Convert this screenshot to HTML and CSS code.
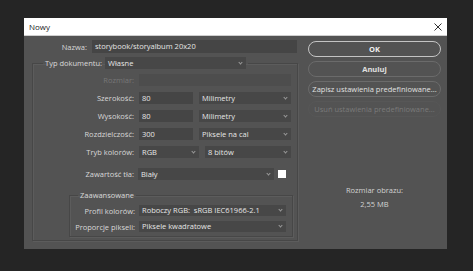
FILE: index.html
```html
<!DOCTYPE html>
<html lang="pl">
<head>
    <meta charset="UTF-8">
    <title>Nowy</title>
    <link rel="stylesheet" href="styles.css">
</head>
<body>
<div class="screen">
    <div class="dialog">
        <div class="titlebar">
            <span class="title">Nowy</span>
            <svg class="close" width="8" height="8" viewBox="0 0 8 8">
                <path d="M0.5 0.5 L7.5 7.5 M7.5 0.5 L0.5 7.5" stroke="#333" stroke-width="1" fill="none"/>
            </svg>
        </div>

        <div class="content">
            <!-- left: form -->
            <div class="form">
                <div class="row">
                    <label class="lbl lbl-name">Nazwa:</label>
                    <div class="input w-name">storybook/storyalbum 20x20</div>
                </div>

                <fieldset class="group outer">
                    <legend class="row legend-doc">
                        <label class="lbl lbl-doc">Typ dokumentu:</label>
                        <div class="select w-doc">Własne</div>
                    </legend>

                    <div class="row first">
                        <label class="lbl lbl-outer disabled">Rozmiar:</label>
                        <div class="input input-off w-size"></div>
                    </div>
                    <div class="row">
                        <label class="lbl lbl-outer">Szerokość:</label>
                        <div class="input w-num">80</div>
                        <div class="select w-unit">Milimetry</div>
                    </div>
                    <div class="row">
                        <label class="lbl lbl-outer">Wysokość:</label>
                        <div class="input w-num">80</div>
                        <div class="select w-unit">Milimetry</div>
                    </div>
                    <div class="row">
                        <label class="lbl lbl-outer">Rozdzielczość:</label>
                        <div class="input w-num">300</div>
                        <div class="select w-unit">Piksele na cal</div>
                    </div>
                    <div class="row">
                        <label class="lbl lbl-outer">Tryb kolorów:</label>
                        <div class="select w-mode">RGB</div>
                        <div class="select w-bits">8 bitów</div>
                    </div>
                    <div class="row row-bg">
                        <label class="lbl lbl-outer">Zawartość tła:</label>
                        <div class="select w-bg">Biały</div>
                        <span class="swatch"></span>
                    </div>

                    <fieldset class="group inner">
                        <legend class="legend-adv">Zaawansowane</legend>
                        <div class="row first small">
                            <label class="lbl lbl-inner">Profil kolorów:</label>
                            <div class="select w-inner">Roboczy RGB:&nbsp; sRGB IEC61966-2.1</div>
                        </div>
                        <div class="row small">
                            <label class="lbl lbl-inner">Proporcje pikseli:</label>
                            <div class="select w-inner">Piksele kwadratowe</div>
                        </div>
                    </fieldset>
                </fieldset>
            </div>

            <!-- right: buttons -->
            <div class="actions">
                <button class="btn btn-primary">OK</button>
                <button class="btn btn-bold">Anuluj</button>
                <button class="btn">Zapisz ustawienia predefiniowane...</button>
                <button class="btn btn-off">Usuń ustawienia predefiniowane...</button>
                <div class="info">
                    <div>Rozmiar obrazu:</div>
                    <div class="info-value">2,55 MB</div>
                </div>
            </div>
        </div>
    </div>
</div>
</body>
</html>
```

FILE: styles.css
```css
* {
    box-sizing: border-box;
}
body {
    margin: 0;
    font-family: "Open Sans", "Noto Sans", sans-serif;
    font-size: 7.5px;
}
.screen {
    width: 473px;
    height: 271px;
    background-color: #252525;
    padding: 18px 0 0 24px;
}
.dialog {
    width: 423px;
    height: 231px;
    background-color: #535353;
}
.titlebar {
    height: 18px;
    background-color: #fff;
    border-bottom: 1px solid #cfcfcf;
    display: flex;
    align-items: center;
    justify-content: space-between;
    padding: 0 5px 0 5px;
}
.title {
    color: #222;
    font-size: 8px;
}
.content {
    display: flex;
    padding: 4px 6px 0 8px;
    gap: 10px;
}

/* form column */
.form {
    width: 266px;
    color: #d8d8d8;
}
.row {
    display: flex;
    align-items: center;
    gap: 5px;
    height: 12px;
    margin-top: 6px;
}
.form > .row:first-child {
    margin-top: 0;
    height: 13px;
}
.lbl {
    text-align: right;
    white-space: nowrap;
    flex: none;
}
.lbl.disabled {
    color: #777;
}
.lbl-name { width: 55px; }
.lbl-outer { width: 101px; }
.lbl-inner { width: 65px; }

.input, .select {
    height: 100%;
    background-color: #454545;
    color: #e6e6e6;
    padding-left: 3px;
    line-height: 12px;
    white-space: nowrap;
    overflow: hidden;
    flex: none;
}
.input-off {
    background-color: #4d4d4d;
}
.select {
    position: relative;
    background-color: #474747;
}
.select::after {
    content: "";
    position: absolute;
    right: 4px;
    top: 4px;
    width: 2px;
    height: 2px;
    border-right: 1px solid #9a9a9a;
    border-bottom: 1px solid #9a9a9a;
    transform: rotate(45deg);
}
.w-name { width: 205px; }
.w-doc { width: 141px; }
.w-size { width: 152px; }
.w-num { width: 54px; }
.w-unit { width: 92px; margin-left: 1px; }
.w-mode { width: 60px; }
.w-bits { width: 86px; margin-left: 1px; }
.w-bg { width: 136px; }
.w-inner { width: 147px; }

/* group boxes */
.group {
    margin: 0;
    padding: 0;
    border: 1px solid #474747;
    box-shadow: inset 1px 1px 0 #5c5c5c, 1px 1px 0 #5c5c5c;
}
.outer {
    margin-top: 4px;
    height: 184px;
}
.legend-doc {
    margin: 0 0 0 10px;
    padding: 0 2px;
    gap: 4px;
}
.legend-doc .lbl-doc {
    width: 56px;
}
.row.first {
    margin-top: 5px;
}
.row-bg {
    margin-top: 10px;
    gap: 4px;
}
.swatch {
    width: 8px;
    height: 8px;
    background-color: #fff;
    flex: none;
}
.inner {
    margin: 10px 4px 0 36px;
    padding-bottom: 4px;
}
.legend-adv {
    margin-left: 8px;
    padding: 0 2px;
    line-height: 10px;
    color: #d8d8d8;
}
.row.small {
    height: 11px;
    gap: 4px;
    margin-top: 5px;
}
.row.small .input, .row.small .select {
    line-height: 11px;
}
.row.small .select::after {
    top: 3px;
}

/* right column */
.actions {
    width: 133px;
    display: flex;
    flex-direction: column;
    gap: 4px;
    padding-top: 1px;
}
.btn {
    height: 16px;
    border: 1px solid #6b6b6b;
    border-radius: 8px;
    background-color: #535353;
    color: #e0e0e0;
    font-family: inherit;
    font-size: 7.5px;
    padding: 0;
    white-space: nowrap;
}
.btn-primary {
    border: 1.5px solid #c4c4c4;
    color: #f0f0f0;
    font-weight: bold;
}
.btn-bold {
    font-weight: bold;
}
.btn-off {
    border-color: #575757;
    color: #7a7a7a;
}
.info {
    margin-top: 64px;
    text-align: center;
    color: #d2d2d2;
    line-height: 10px;
}
.info-value {
    margin-top: 4px;
}
```
